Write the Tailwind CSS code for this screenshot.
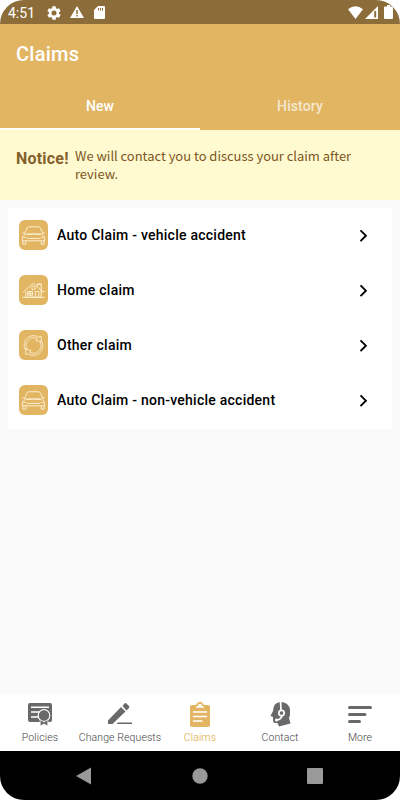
<!DOCTYPE html>
<html lang="en">
<head>
<meta charset="utf-8">
<title>Claims</title>
<script src="https://cdn.jsdelivr.net/npm/@tailwindcss/browser@4"></script>
</head>
<body class="bg-white">
<svg class="hidden">
  <symbol id="car" viewBox="0 0 30 30"><g fill="none" stroke="#fff6df" stroke-width=".9" stroke-linejoin="round"><path d="M5.500 14l3-6.500 1.500-1h10.500l1.500 1 3 6.500M3.500 13h2M24.500 13h2M4.500 16l2.500-2h16l2.500 2 1 1.500v3.500H3.500v-3.500zM8 14.500q7-1.300 14 0M4.500 17.500h3M22.500 17.500h3M8 18.500h14M4 21v3.500h3V21M23 21v3.500h3V21"/></g></symbol>
  <symbol id="chev" viewBox="0 0 10 14"><path d="M1.500 1.300L6.900 6.700l-5.400 5.400" fill="none" stroke="#000" stroke-width="1.900"/></symbol>
</svg>
<div class="w-[400px] h-[800px] flex flex-col overflow-hidden rounded-[24px] bg-[#fafafa] font-[Roboto,sans-serif]">
  <div class="h-6 shrink-0 bg-[#8c6d39] flex items-center pl-2 pr-[7px] text-white">
    <span class="w-[39px] text-[14px] leading-6 pt-[2px]">4:51</span>
    <svg class="w-[14px] h-[14px] mr-[9px] mt-[1px]" viewBox="2 2 20 20" fill="#fff"><path d="M19.140 12.940c.040-.300.060-.610.060-.940s-.020-.640-.070-.940l2.030-1.580a.490.490 0 0 0 .120-.610l-1.920-3.320a.490.490 0 0 0-.590-.220l-2.390.960a7 7 0 0 0-1.620-.940l-.360-2.540A.48.48 0 0 0 13.920 2.400h-3.840c-.240 0-.430.170-.470.410l-.360 2.540a7 7 0 0 0-1.620.940l-2.390-.960a.48.48 0 0 0-.590.220L2.740 8.870c-.120.210-.080.470.120.610l2.030 1.580a7 7 0 0 0 0 1.880l-2.030 1.580a.49.49 0 0 0-.120.610l1.920 3.320c.120.220.370.290.590.220l2.390-.960c.500.380 1.030.700 1.620.940l.360 2.540c.050.240.240.410.480.410h3.840c.240 0 .440-.170.470-.410l.360-2.540a7 7 0 0 0 1.620-.940l2.390.960c.220.080.470 0 .590-.220l1.920-3.320a.48.48 0 0 0-.120-.610zM12 15.600a3.600 3.600 0 1 1 0-7.200 3.600 3.600 0 0 1 0 7.200z"/></svg>
    <svg class="w-[14px] h-[12px] mr-[10px]" viewBox="0 0 14 12"><path d="M7 0l7 12H0z" fill="#fff"/><path d="M7 4v4M7 9v1.500" stroke="#8c6d39" stroke-width="1.500"/></svg>
    <svg class="w-[11px] h-[13px]" viewBox="0 0 11 13"><path d="M4 0h6q1 0 1 1v11q0 1-1 1H1q-1 0-1-1V4z" fill="#fff"/><path d="M4.500 2v2.500M6.500 2v2.500M8.500 2v2.500" stroke="#8c6d39" stroke-width="1"/></svg>
    <svg class="ml-auto w-[15px] h-[13px] mr-[2px]" viewBox="0 0 15 13"><path d="M0 3.200Q7.500-2.600 15 3.200L7.500 13z" fill="#fff"/></svg>
    <svg class="w-[13px] h-[13px] mr-[6px]" viewBox="0 0 13 13"><path d="M13 0v13H0z" fill="#fff"/><path d="M10.200 5v6.500" stroke="#8c6d39" stroke-width="2"/></svg>
    <svg class="w-[9px] h-[14px]" viewBox="0 0 9 14"><path d="M3 0h3v1.500h2q1 0 1 1V13q0 1-1 1H1q-1 0-1-1V2.500q0-1 1-1h2z" fill="#fff"/></svg>
  </div>
  <header class="h-[106px] shrink-0 bg-[#e2b563] text-white flex flex-col">
    <h1 class="h-[59px] pl-4 text-[20px] leading-[60px] font-medium tracking-[0.250px]">Claims</h1>
    <div class="flex-1 grid grid-cols-2 text-center text-[14px] leading-[47px] font-medium tracking-[0.100px]">
      <div class="h-[47px] border-b-[2px] border-white">New</div>
      <div class="text-white/70">History</div>
    </div>
  </header>
  <section class="h-[70px] shrink-0 bg-[#fffacf] border-t border-[#fff7c6] pl-4 flex text-[#85602c]">
    <b class="w-[59px] pt-[18px] text-[16px] leading-[20px] font-bold tracking-[0.200px] whitespace-nowrap">Notice!</b>
    <p class="w-[300px] pt-4 text-[13px] leading-[18px] tracking-[-0.030px] font-['Noto_Sans_CJK_SC',sans-serif] text-[#7c5624]">We will contact you to discuss your claim after<br>review.</p>
  </section>
  <main class="flex-1 px-2 pt-2">
    <ul class="h-[221px] bg-white text-[14px] font-medium tracking-[0.250px] text-black">
      <li class="h-[55px] flex items-center pl-[11px] pr-[23px]"><svg class="w-[29px] h-[30px] mb-[1px] rounded-[6px] bg-[#e2b563]"><use href="#car"/></svg><span class="ml-[9px] pb-[1px]">Auto Claim - vehicle accident</span><svg class="ml-auto w-[10px] h-[14px]"><use href="#chev"/></svg></li>
      <li class="h-[55px] flex items-center pl-[11px] pr-[23px]"><svg class="w-[29px] h-[30px] mb-[1px] rounded-[6px] bg-[#e2b563]" viewBox="0 0 30 30"><g fill="none" stroke="#fff6df" stroke-width=".9"><path d="M4 17.500L15 8l8.500 8M7 16.500v6h16V15M3.500 22.500h23M19 11.500V9h4v7.500h3.500M18.500 9h5M9 16.500h5v4H9zM11.500 16.500v4M9 18.500h5M17 22v-5.500h3.500V22"/><circle cx="15" cy="12.800" r="1.900"/></g></svg><span class="ml-[9px] pb-[1px]">Home claim</span><svg class="ml-auto w-[10px] h-[14px]"><use href="#chev"/></svg></li>
      <li class="h-[55px] flex items-center pl-[11px] pr-[23px]"><svg class="w-[29px] h-[30px] mb-[1px] rounded-[6px] bg-[#e2b563]" viewBox="0 0 30 30"><g fill="none" stroke="#fff6df" stroke-width=".8"><path id="half" d="M6.500 19.800A9.800 9.800 0 0 1 20.500 6.900M8.300 18.900A7.800 7.800 0 0 1 19 8.500M6.500 19.800l1.800-.9M20.500 6.900l2.500-.9v5.500l-5.500-1L19 8.500"/><use href="#half" transform="rotate(180 15 15.500)"/></g></svg><span class="ml-[9px] pb-[1px]">Other claim</span><svg class="ml-auto w-[10px] h-[14px]"><use href="#chev"/></svg></li>
      <li class="h-[55px] flex items-center pl-[11px] pr-[23px]"><svg class="w-[29px] h-[30px] mb-[1px] rounded-[6px] bg-[#e2b563]"><use href="#car"/></svg><span class="ml-[9px] pb-[1px]">Auto Claim - non-vehicle accident</span><svg class="ml-auto w-[10px] h-[14px]"><use href="#chev"/></svg></li>
    </ul>
  </main>
  <nav class="h-[57px] shrink-0 bg-white grid grid-cols-5 text-center text-[10.500px] leading-[14px] font-light tracking-[0.100px] text-[#444] whitespace-nowrap">
    <div class="flex flex-col items-center pt-[7px]"><svg class="w-[26px] h-[26px]" viewBox="0 0 26 26"><path d="M3 2h20q2 0 2 2v15q0 2-2 2H3q-2 0-2-2V4q0-2 2-2z" fill="#696969"/><path d="M4 6.300h18M4 11h10M4 16h8" stroke="#fff" stroke-width="1.500"/><circle cx="17" cy="14.500" r="5.800" fill="#696969" stroke="#fff" stroke-width="1.200"/><path d="M13.200 18.500L17 21l3.800-2.500V25L17 23l-3.800 2z" fill="#696969" stroke="#fff" stroke-width=".7"/><circle cx="17" cy="14.500" r="5" fill="#696969"/></svg><span class="mt-[4px]">Policies</span></div>
    <div class="flex flex-col items-center pt-[7px]"><svg class="w-[26px] h-[26px]" viewBox="0 0 26 26" fill="#696969"><path d="M1 19.500L14 6l4.500 4.500L5.500 23H1zM15.500 5l2-2.500q1-.8 2 0L22 5q.8 1 0 2l-2.500 2.500zM11 21.500h14V23H9.500z"/></svg><span class="mt-[4px]">Change Requests</span></div>
    <div class="flex flex-col items-center pt-[7px] text-[#e0a73a]"><svg class="w-[26px] h-[26px]" viewBox="0 0 26 26"><path d="M5 4h4q.5-2 3-3 2-.8 3 .5L17 4h4q2 0 2 2v18q0 2-2 2H5q-2 0-2-2V6q0-2 2-2z" fill="#e2b563"/><path d="M8.800 6.800q0-1.800 2.200-1.800 0-2.300 2-2.300t2 2.300q2.200 0 2.200 1.800z" fill="#fff"/><path d="M6.500 11h13M6.500 15.500h13M6.500 20H15" stroke="#fff" stroke-width="1.500" stroke-linecap="round"/></svg><span class="mt-[4px]">Claims</span></div>
    <div class="flex flex-col items-center pt-[7px]"><svg class="w-[26px] h-[26px]" viewBox="0 0 26 26"><path d="M13 1q9 0 10 8 .5 5-1 8l1.500 5.500-11.500 3-1.500-3.500H8q-2 0-2-3v-3l-2.500-1L6 10Q6 2 13 1z" fill="#696969"/><path d="M13.500 0l.5 9.500M15 15q-1 3.500-6 4.500" fill="none" stroke="#fff" stroke-width="1.700" stroke-linecap="round"/><circle cx="14.500" cy="12" r="2.700" fill="#696969" stroke="#fff" stroke-width="1.700"/><circle cx="9.500" cy="19" r="1.400" fill="#fff"/></svg><span class="mt-[4px]">Contact</span></div>
    <div class="flex flex-col items-center pt-[7px]"><svg class="w-[26px] h-[26px]" viewBox="0 0 26 26"><path d="M2.500 6.500h21M2.500 13.500H18M2.500 20.500h10" stroke="#696969" stroke-width="3" stroke-linecap="round"/></svg><span class="mt-[4px]">More</span></div>
  </nav>
  <div class="h-[49px] shrink-0 bg-black">
    <svg class="w-[400px] h-[49px]" viewBox="0 0 400 49" fill="#999"><path d="M76 25l15-8.500v17z"/><circle cx="200" cy="25" r="7.700"/><rect x="307" y="17" width="16" height="16" rx="1"/></svg>
  </div>
</div>
</body>
</html>
